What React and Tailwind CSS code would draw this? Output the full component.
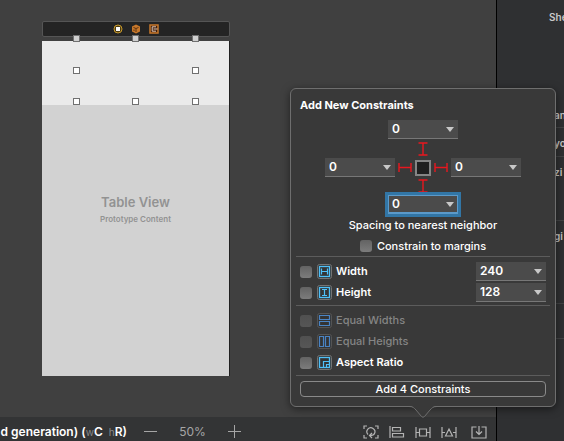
import React from "react";

function Combo({ label, value, focused = false }) {
  return (
    <div
      className={
        "grid h-[19px] w-[70px] shrink-0 items-center border-b bg-[#4b4b4b] " +
        (focused
          ? "border-[#5b9aca] shadow-[inset_0_0_0_1px_#5b9aca] outline-3 outline-[#3276a6]"
          : "border-[#777777]")
      }
    >
      <select
        aria-label={label}
        defaultValue={value}
        className="col-start-1 row-start-1 h-[18px] w-full appearance-none bg-transparent pl-1 text-[12px] font-semibold leading-[18px] text-white outline-none"
      >
        <option>{value}</option>
      </select>
      <svg
        className="pointer-events-none col-start-1 row-start-1 mr-1 justify-self-end"
        width="8"
        height="5"
        viewBox="0 0 8 5"
      >
        <path d="M0 0h8L4 5z" fill="#c8c8c8" />
      </svg>
    </div>
  );
}

function Strut({ vertical = false }) {
  return vertical ? (
    <svg width="10" height="14" viewBox="0 0 10 14" className="shrink-0">
      <path d="M0.500 1h9M5 1v12M0.500 13h9" stroke="#e8171f" strokeWidth="1.400" />
    </svg>
  ) : (
    <svg width="14" height="9" viewBox="0 0 14 9" className="shrink-0">
      <path d="M1 0v9M1 4.500h12M13 0v9" stroke="#e8171f" strokeWidth="1.400" />
    </svg>
  );
}

const check =
  "size-3 shrink-0 appearance-none rounded-[3px] bg-linear-to-b from-[#636363] to-[#7c7c7c] checked:from-[#3276a6] checked:to-[#3276a6] disabled:from-[#505050] disabled:to-[#565656]";

const glyphs = {
  width: "M4.500 4.500v6M4.500 7.500h6M10.500 4.500v6",
  height: "M5 4.500h5M7.500 4.500v6M5 10.500h5",
  ratio: "M6.500 12V6.500H12M9.500 12V9.500H12",
};

function ConstraintIcon({ kind, dim }) {
  const color = dim ? "#4a84c4" : "#4fc0f8";
  return (
    <svg width="15" height="15" viewBox="0 0 15 15" className="shrink-0" fill="none">
      <rect x="0.500" y="0.500" width="14" height="14" rx="2" fill="#343434" stroke={dim ? "#545454" : "#747474"} />
      {kind === "widths" && (
        <path d="M2.500 2.500h10v4h-10zM2.500 8.500h10v4h-10z" stroke={color} strokeWidth="1.200" />
      )}
      {kind === "heights" && (
        <path d="M2.500 2.500h4v10h-4zM8.500 2.500h4v10h-4z" stroke={color} strokeWidth="1.200" />
      )}
      {glyphs[kind] && (
        <>
          <rect x="2.500" y="2.500" width="10" height="10" stroke={color} strokeWidth="1.300" />
          <path d={glyphs[kind]} stroke={color} strokeWidth="1.200" />
        </>
      )}
    </svg>
  );
}

function Row({ kind, label, value, dim = false }) {
  return (
    <div className="flex h-[21px] items-center">
      <label className={"flex h-full flex-1 items-center text-[11px] " + (dim ? "font-medium text-[#858585]" : "font-semibold text-white")}>
        <input type="checkbox" disabled={dim} className={check} />
        <span className="ml-[5px] mr-1 flex">
          <ConstraintIcon kind={kind} dim={dim} />
        </span>
        {label}
      </label>
      {value && <Combo label={label + " value"} value={value} />}
    </div>
  );
}

function Popover() {
  return (
    <section className="absolute bottom-[34px] right-2 w-[266px] rounded-md border border-[#6e6e6e] bg-[#393939] px-[5px] pb-[9px] pt-2 shadow-[0_2px_8px_rgba(0,0,0,0.5)]">
      <h2 className="px-1 text-[11px] font-bold leading-4 text-white">Add New Constraints</h2>

      <div className="mt-[7px] flex flex-col items-center">
        <Combo label="Top spacing" value="0" />
        <div className="mt-[3px] flex flex-col items-center gap-[2px]">
          <Strut vertical />
          <div className="flex items-center gap-[3px]">
            <Combo label="Leading spacing" value="0" />
            <Strut />
            <div className="size-4 border-2 border-[#858585] bg-[#202020]" />
            <Strut />
            <Combo label="Trailing spacing" value="0" />
          </div>
          <Strut vertical />
        </div>
        <div className="mt-[2px]">
          <Combo label="Bottom spacing" value="0" focused />
        </div>
        <p className="mt-[3px] text-[11px] font-medium leading-4 text-white">Spacing to nearest neighbor</p>
        <label className="mt-[5px] flex h-4 items-center gap-[5px] text-[11px] font-medium leading-4 text-white">
          <input type="checkbox" className={check} />
          Constrain to margins
        </label>
      </div>

      <div className="mt-[2px] border-t border-[#5c5c5c] px-1 pb-[2px] pt-1">
        <Row kind="width" label="Width" value="240" />
        <Row kind="height" label="Height" value="128" />
      </div>
      <div className="border-t border-[#5c5c5c] px-1 pb-[2px] pt-1">
        <Row kind="widths" label="Equal Widths" dim />
        <Row kind="heights" label="Equal Heights" dim />
        <Row kind="ratio" label="Aspect Ratio" />
      </div>
      <div className="border-t border-[#5c5c5c] px-1 pt-[5px]">
        <button className="block h-4 w-full rounded-sm border border-[#8a8a8a] text-[11px] font-medium leading-[14px] text-white">
          Add 4 Constraints
        </button>
      </div>

      <svg className="absolute -bottom-[13px] left-[118px]" width="28" height="13" viewBox="0 0 28 13" fill="none">
        <path d="M0 0C4 0 5 2 7 4l7 7.500L21 4c2-2 3-4 7-4z" fill="#393939" />
        <path d="M0 0.500C4 0.500 5 2 7 4l5.500 6.500q1.500 1.500 3 0L21 4c2-2 3-3.500 7-3.500" stroke="#6e6e6e" />
      </svg>
    </section>
  );
}

function Handle({ place, solid = false }) {
  return (
    <span
      className={
        "absolute size-[7px] border border-[#707070] " + place + (solid ? " bg-[#cfcfcf]" : " bg-white")
      }
    />
  );
}

function Scene() {
  return (
    <div className="w-[188px]">
      <div className="flex h-4 items-center justify-center gap-2 rounded-xs border border-[#555555] bg-[#242424]">
        <svg width="10" height="10" viewBox="0 0 10 10">
          <circle cx="5" cy="5" r="4" fill="#4a3a12" stroke="#c89a2c" />
          <rect x="3" y="3" width="4" height="4" fill="#ffffff" />
        </svg>
        <svg width="10" height="10" viewBox="0 0 10 10">
          <path d="M5 0.500l4 2v5l-4 2-4-2v-5z" fill="#c8782b" />
          <path d="M2.500 3.500L5 4.500l2.500-1M5 4.500v3.500M3 5.500v1.500" stroke="#5b3210" fill="none" />
        </svg>
        <svg width="10" height="10" viewBox="0 0 10 10" fill="none">
          <rect x="1" y="1" width="8" height="8" fill="#3c1d0c" stroke="#c8782b" strokeWidth="1.500" />
          <path d="M7 2.800H3.200v4.400H7M4.500 5H8.500" stroke="#e0c8b8" />
        </svg>
      </div>
      <div className="relative mt-1 border-r border-[#202020] bg-[#d2d2d2]">
        <div className="h-16 bg-[#eaeaea]" />
        <div className="flex h-[271px] flex-col items-center pt-[88px] text-[#929292]">
          <p className="text-[13px] font-semibold leading-[18px]">Table View</p>
          <p className="mt-px text-[8px] font-semibold leading-[14px]">Prototype Content</p>
        </div>
        <Handle place="-top-[6px] left-[31px]" solid />
        <Handle place="-top-[6px] left-[90px]" solid />
        <Handle place="-top-[6px] left-[150px]" solid />
        <Handle place="top-[26px] left-[31px]" />
        <Handle place="top-[26px] left-[150px]" />
        <Handle place="top-[57px] left-[31px]" />
        <Handle place="top-[57px] left-[90px]" />
        <Handle place="top-[57px] left-[150px]" />
      </div>
    </div>
  );
}

const tool = "flex h-4 items-center justify-center";

function CanvasBar() {
  return (
    <footer className="flex h-6 items-center whitespace-nowrap bg-[#333435] pr-[9px] pt-[5px] text-white">
      <p className="flex w-[127px] justify-end text-[12px] font-semibold leading-4">
        <span className="whitespace-pre">
          d generation) (<span className="text-[10px] font-normal text-[#8a8a8a]">w</span>C{"  "}
          <span className="text-[10px] font-normal text-[#8a8a8a]">h</span>R)
        </span>
      </p>
      <button aria-label="Zoom out" className={tool + " ml-4"}>
        <svg width="15" height="15" viewBox="0 0 15 15"><path d="M1 7.500h13" stroke="#a6a6a6" /></svg>
      </button>
      <span className="w-[69px] text-center text-[12px] leading-4 text-[#a6a6a6]">50%</span>
      <button aria-label="Zoom in" className={tool}>
        <svg width="15" height="15" viewBox="0 0 15 15"><path d="M1 7.500h13M7.500 1v13" stroke="#a6a6a6" /></svg>
      </button>
      <div className="ml-auto flex items-center gap-[10px] text-[#b4b4b4]">
        <button aria-label="Update frames" className={tool}>
          <svg width="16" height="14" viewBox="0 0 16 14" fill="none" stroke="currentColor" strokeWidth="1.200">
            <path d="M1 4V1h3M12 1h3v3M15 10v3h-3M4 13H1v-3" />
            <path d="M5 9.500A4 4 0 1 1 11.500 8.500M11.500 8.500C11 10 9.500 10.500 7 10.500M9 8L6.500 10.500 9 13" />
          </svg>
        </button>
        <button aria-label="Align" className={tool}>
          <svg width="16" height="14" viewBox="0 0 16 14" fill="none" stroke="currentColor" strokeWidth="1.200">
            <path d="M1 1v12M3.500 2.500h8v3.500h-8zM3.500 8.500h11v3.500h-11z" />
          </svg>
        </button>
        <button aria-label="Add new constraints" className={tool}>
          <svg width="16" height="14" viewBox="0 0 16 14" fill="none" stroke="currentColor" strokeWidth="1.200">
            <path d="M1 2v11M15 2v11M1 7.500h3M12 7.500h3M4.500 4h7v7h-7z" />
          </svg>
        </button>
        <button aria-label="Resolve layout issues" className={tool}>
          <svg width="16" height="14" viewBox="0 0 16 14" fill="none" stroke="currentColor" strokeWidth="1.200">
            <path d="M1 2v11M15 2v11M1 7.500h3M12 7.500h3M8 4l3.500 7h-7z" />
          </svg>
        </button>
        <button aria-label="Embed in" className={tool + " ml-1"}>
          <svg width="16" height="14" viewBox="0 0 16 14" fill="none" stroke="currentColor" strokeWidth="1.200">
            <path d="M5.500 2H1v11h14V2h-4.500M8 1v8M5 6.500l3 3 3-3" />
          </svg>
        </button>
      </div>
    </footer>
  );
}

function Inspector() {
  const line = "border-b border-[#434445] pl-[57px]";
  return (
    <aside className="w-[68px] shrink-0 overflow-hidden whitespace-nowrap border-l border-black bg-[#2f3032] text-[10px] font-semibold leading-4 text-[#c8c8c8]">
      <p className="pl-[52px] pt-[9px]">She</p>
      <p className={line + " pt-[82px] pb-1"}>an</p>
      <p className={line + " pt-[7px] pb-[5px]"}>yo</p>
      <p className={line + " pt-[7px] pb-10"}>zi</p>
      <p className={line + " pt-[7px] pb-[59px]"}>gi</p>
      <div className="h-[35px] border-b border-[#434445]" />
    </aside>
  );
}

export default function App() {
  return (
    <div
      className="relative flex min-h-screen overflow-hidden bg-[#404040] font-['Inter','Liberation_Sans',sans-serif]"
    >
      <main className="flex min-w-0 flex-1 flex-col">
        <div className="flex-1 pl-[42px] pt-[21px]">
          <Scene />
        </div>
        <CanvasBar />
      </main>
      <Inspector />
      <Popover />
    </div>
  );
}
